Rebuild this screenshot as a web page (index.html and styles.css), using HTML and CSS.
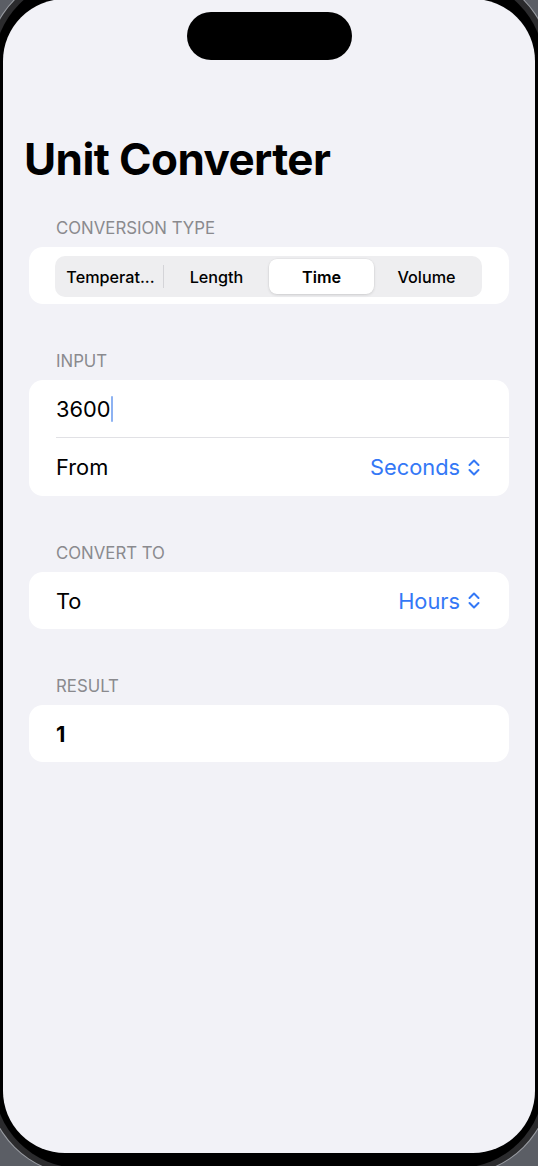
FILE: index.html
```html
<!DOCTYPE html>
<html lang="en">
<head>
<meta charset="utf-8">
<title>Unit Converter</title>
<link rel="stylesheet" href="styles.css">
</head>
<body>
<div class="device">
  <div class="screen">
    <div class="island"></div>
    <h1 class="title">Unit Converter</h1>

    <section class="section">
      <div class="section-header">Conversion Type</div>
      <div class="card card-seg">
        <div class="segmented">
          <div class="seg">Temperat...</div>
          <div class="seg-divider"></div>
          <div class="seg">Length</div>
          <div class="seg seg-selected">Time</div>
          <div class="seg">Volume</div>
        </div>
      </div>
    </section>

    <section class="section">
      <div class="section-header">Input</div>
      <div class="card">
        <div class="row"><span class="value">3600<span class="cursor"></span></span></div>
        <div class="row">
          <span class="label">From</span>
          <span class="picker">Seconds
            <svg class="chev" width="14" height="21" viewBox="0 0 14 21"><path d="M2.5 8 L7 3.5 L11.5 8 M2.5 13 L7 17.5 L11.5 13" fill="none" stroke="currentColor" stroke-width="2" stroke-linecap="round" stroke-linejoin="round"/></svg>
          </span>
        </div>
      </div>
    </section>

    <section class="section">
      <div class="section-header">Convert To</div>
      <div class="card">
        <div class="row">
          <span class="label">To</span>
          <span class="picker">Hours
            <svg class="chev" width="14" height="21" viewBox="0 0 14 21"><path d="M2.5 8 L7 3.5 L11.5 8 M2.5 13 L7 17.5 L11.5 13" fill="none" stroke="currentColor" stroke-width="2" stroke-linecap="round" stroke-linejoin="round"/></svg>
          </span>
        </div>
      </div>
    </section>

    <section class="section">
      <div class="section-header">Result</div>
      <div class="card">
        <div class="row"><span class="result">1</span></div>
      </div>
    </section>
  </div>
</div>
</body>
</html>
```
FILE: styles.css
```css
html, body {
  margin: 0;
  padding: 0;
  overflow: hidden;
  height: 100%;
}
body {
  background: #5b5e65;
  font-family: Inter, "Noto Sans", "Liberation Sans", sans-serif;
  color: #000;
}
.device {
  width: 550px;
  height: 1189px;
  box-sizing: border-box;
  margin: -21px 0 0 -6px;
  padding: 20px 9px 15px 9px;
  background: #000;
  border-radius: 86px;
  box-shadow: 0 0 0 6px #2b2b2d, 0 0 0 7px #9a9da3;
}
.screen {
  width: 532px;
  height: 1154px;
  background: #f2f2f7;
  border-radius: 62px;
  overflow: hidden;
  display: flex;
  flex-direction: column;
}
.island {
  align-self: center;
  width: 165px;
  height: 48px;
  margin-top: 13px;
  border-radius: 24px;
  background: #000;
}
.title {
  margin: 71px 0 0 21px;
  font-size: 44px;
  line-height: 56px;
  font-weight: 700;
  letter-spacing: -0.6px;
}
.section {
  margin: 0 26px;
}
.section-header {
  margin: 31px 0 9px 27px;
  font-size: 16.8px;
  line-height: 20px;
  text-transform: uppercase;
  color: #8a8a8e;
}
.section + .section .section-header {
  margin-top: 47px;
}
.card {
  background: #fff;
  border-radius: 14px;
}
.card-seg {
  padding: 9px 27px 7px 26px;
}
.segmented {
  display: flex;
  align-items: center;
  height: 41px;
  padding: 3px;
  box-sizing: border-box;
  background: #eeeef0;
  border-radius: 10px;
}
.seg {
  flex: 1 1 0;
  height: 100%;
  display: flex;
  align-items: center;
  justify-content: center;
  font-size: 16.2px;
  font-weight: 500;
  white-space: nowrap;
  border-radius: 8px;
}
.seg-divider {
  flex: 0 0 1px;
  height: 23px;
  background: #d4d4d8;
}
.seg-selected {
  background: #fff;
  font-weight: 600;
  box-shadow: 0 1px 3px rgba(0,0,0,0.12), 0 0 0 0.5px rgba(0,0,0,0.04);
}
.row {
  display: flex;
  align-items: center;
  justify-content: space-between;
  height: 58px;
  margin-left: 27px;
  padding-right: 28px;
  font-size: 21.8px;
}
.card .row:first-child {
  height: 57px;
}
.row + .row {
  border-top: 1px solid #e1e1e5;
}
.value {
  display: flex;
  align-items: center;
}
.cursor {
  display: inline-block;
  width: 2px;
  height: 26px;
  margin-left: 1px;
  background: #8db2f2;
  border-radius: 1px;
}
.picker {
  display: flex;
  align-items: center;
  gap: 7px;
  color: #3478f6;
}
.chev {
  display: block;
}
.result {
  font-weight: 700;
}
```
